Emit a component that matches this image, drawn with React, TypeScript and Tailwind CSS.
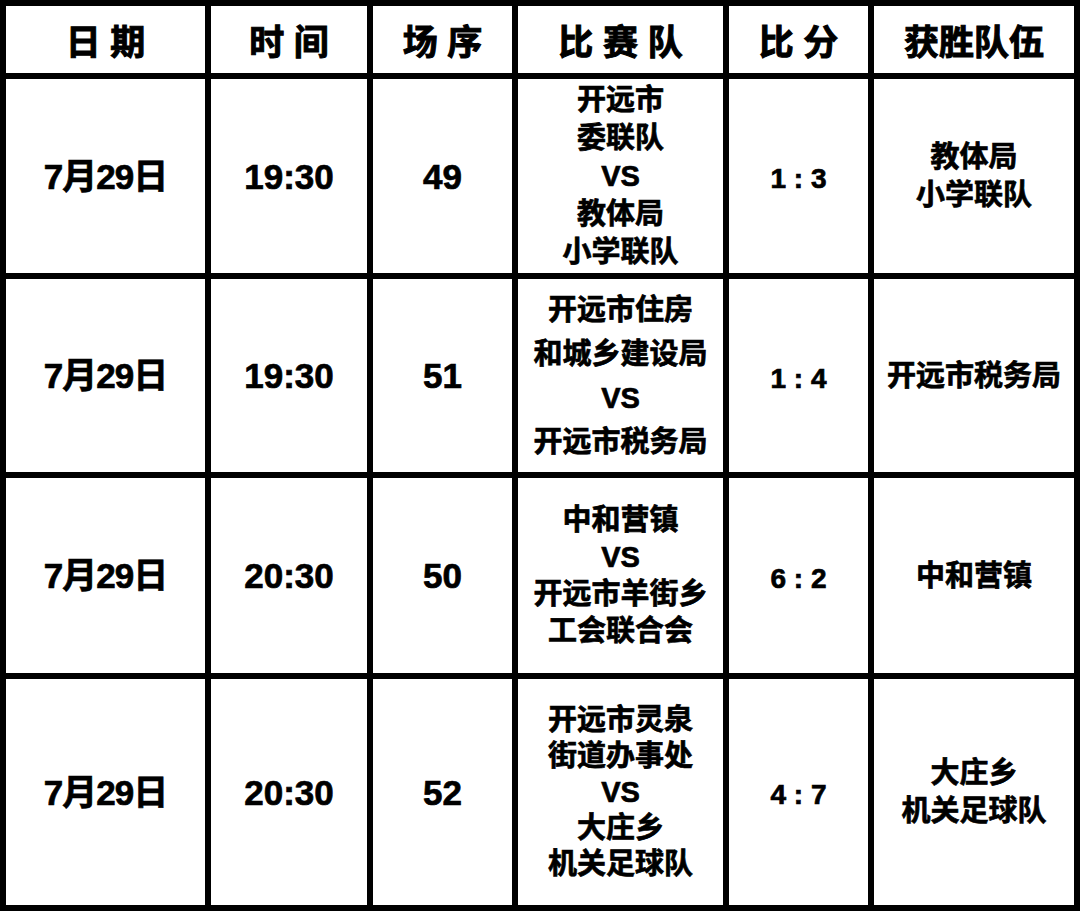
type Match = {
  date: string;
  time: string;
  no: string;
  teams: string[];
  lh: string;
  score: string;
  winner: string[];
};

const matches: Match[] = [
  {
    date: "7月29日",
    time: "19:30",
    no: "49",
    teams: ["开远市", "委联队", "VS", "教体局", "小学联队"],
    lh: "leading-[38px]",
    score: "1 : 3",
    winner: ["教体局", "小学联队"],
  },
  {
    date: "7月29日",
    time: "19:30",
    no: "51",
    teams: ["开远市住房", "和城乡建设局", "VS", "开远市税务局"],
    lh: "leading-[44px]",
    score: "1 : 4",
    winner: ["开远市税务局"],
  },
  {
    date: "7月29日",
    time: "20:30",
    no: "50",
    teams: ["中和营镇", "VS", "开远市羊街乡", "工会联合会"],
    lh: "leading-[37px]",
    score: "6 : 2",
    winner: ["中和营镇"],
  },
  {
    date: "7月29日",
    time: "20:30",
    no: "52",
    teams: ["开远市灵泉", "街道办事处", "VS", "大庄乡", "机关足球队"],
    lh: "leading-[36px]",
    score: "4 : 7",
    winner: ["大庄乡", "机关足球队"],
  },
];

const headers = ["日 期", "时 间", "场 序", "比 赛 队", "比 分", "获胜队伍"];

function Cell({ children, className = "" }: { children: React.ReactNode; className?: string }) {
  return (
    <div className={`flex flex-col items-center justify-center bg-white text-center ${className}`}>
      {children}
    </div>
  );
}

export default function App() {
  return (
    <div
      className="grid h-[911px] w-[1080px] grid-cols-[199px_156px_139px_205px_139px_200px] grid-rows-[67px_194px_193px_195px_226px] gap-[6px] bg-black p-[6px] font-bold text-black [-webkit-text-stroke:0.7px_black]"
      style={{ fontFamily: '"Liberation Sans", "Noto Sans CJK SC", sans-serif' }}
    >
      {headers.map((h) => (
        <Cell key={h} className="pt-[5px] text-[35px] leading-none [-webkit-text-stroke:1px_black]">
          {h}
        </Cell>
      ))}

      {matches.map((m) => (
        <div key={m.no} className="contents">
          <Cell className="text-[35px] leading-none tracking-[-1px]">{m.date}</Cell>
          <Cell className="text-[35px] leading-none">{m.time}</Cell>
          <Cell className="text-[35px] leading-none">{m.no}</Cell>
          <Cell className={`text-[29px] ${m.lh}`}>
            {m.teams.map((t, i) => (
              <span key={i}>{t}</span>
            ))}
          </Cell>
          <Cell className="pt-[6px] text-[28px] leading-none">{m.score}</Cell>
          <Cell className="text-[29px] leading-[38px]">
            {m.winner.map((t, i) => (
              <span key={i}>{t}</span>
            ))}
          </Cell>
        </div>
      ))}
    </div>
  );
}
